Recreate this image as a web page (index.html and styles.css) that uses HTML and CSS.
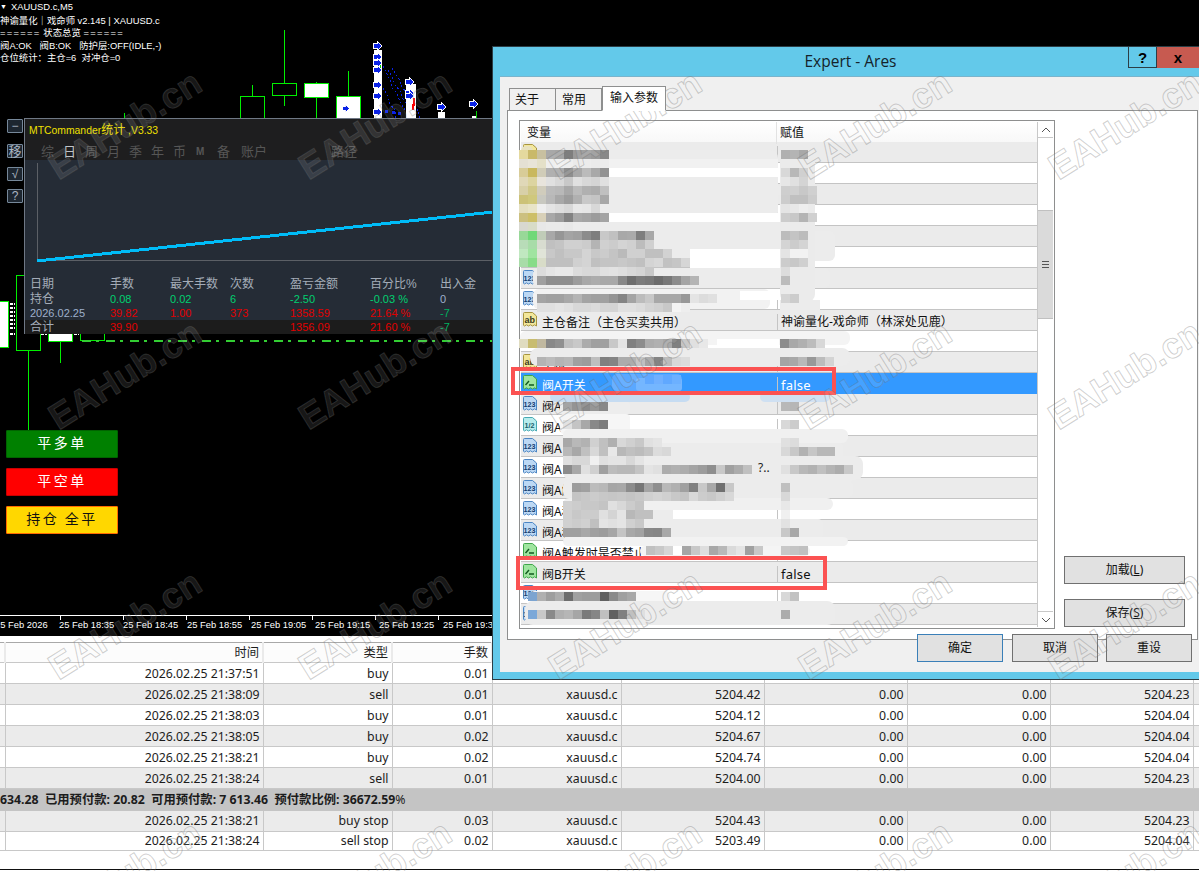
FILE: index.html
```html
<!DOCTYPE html>
<html lang="zh-CN">
<head>
<meta charset="utf-8">
<title>Expert - Ares</title>
<link rel="stylesheet" href="styles.css">
</head>
<body>
<svg class="defs" width="0" height="0" aria-hidden="true">
  <defs>
    <symbol id="ic-ab" viewBox="0 0 16 17">
      <path d="M1.5 2.5q0-1 1-1h8l4 3.5v10l-2-1.2-2 1.2-2-1.2-2 1.2-2-1.2-2 1.2-1-.7z" fill="#f3e79a" stroke="#a8953f"/>
      <text x="2.5" y="12" class="ic-t" fill="#3b3b20">ab</text>
    </symbol>
    <symbol id="ic-num" viewBox="0 0 16 17">
      <path d="M1.5 2.5q0-1 1-1h8l4 3.5v10l-2-1.2-2 1.2-2-1.2-2 1.2-2-1.2-2 1.2-1-.7z" fill="#bcd8f4" stroke="#4c86c4"/>
      <text x="1.6" y="11.5" class="ic-s" fill="#123c70">123</text>
    </symbol>
    <symbol id="ic-half" viewBox="0 0 16 17">
      <path d="M1.5 2.5q0-1 1-1h8l4 3.5v10l-2-1.2-2 1.2-2-1.2-2 1.2-2-1.2-2 1.2-1-.7z" fill="#b6ecec" stroke="#47a9b4"/>
      <text x="2.4" y="11.5" class="ic-s" fill="#17606c">1/2</text>
    </symbol>
    <symbol id="ic-bool" viewBox="0 0 16 17">
      <path d="M1.5 2.5q0-1 1-1h8l4 3.5v10l-2-1.2-2 1.2-2-1.2-2 1.2-2-1.2-2 1.2-1-.7z" fill="#9fe59f" stroke="#3fa64a"/>
      <path d="M3.5 11l3.5-4M7 11h5" fill="none" stroke="#12591f" stroke-width="1.4"/>
    </symbol>
    <symbol id="arrow" viewBox="0 0 12 14">
      <path d="M1 4h4V1l6 6-6 6v-3H1z" fill="#0a22e6" stroke="#fff" stroke-width="1.4"/>
    </symbol>
  </defs>
</svg>

<div class="terminal">
  <section class="chart">
    <svg class="candles" width="493" height="636" viewBox="0 0 493 636" aria-hidden="true">
      <g class="up">
        <path d="M252.5 85v11M284.5 30v54M284.5 95v11M316.5 82v2M316.5 97v24M348.5 71v26M124.5 113v6M28.5 350v80M60.5 341v22M40.5 333v18"/>
        <rect x="240.5" y="96.5" width="24" height="30"/>
        <rect x="272.5" y="83.5" width="24" height="12"/>
        <rect class="w" x="304.5" y="83.5" width="24" height="14"/>
        <rect class="w" x="336.5" y="96.5" width="24" height="30"/>
        <rect class="w" x="-5.5" y="301.5" width="14" height="46"/>
        <rect x="16.5" y="275.5" width="24" height="75"/>
        <rect class="w" x="48.5" y="325.5" width="24" height="16"/>
        <rect x="80.5" y="325.5" width="24" height="15"/>
      </g>
      <path class="cloud" d="M383 66l4 8 3 6 2 8 5 5 3 9 5 8 4 8M388 70l5 9 2 6 5 6 3 8 6 10M383 88l5 8 2 8 5 6 1 8M392 68l7 11 3 8 6 7 4 8 5 7 3 9"/>
      <path class="dots" d="M385 111h4M392 112h4M398 113h4M410 113h3"/>
      <g class="white-stacks">
        <rect x="374" y="50" width="8" height="70"/>
        <rect x="406" y="84" width="10" height="36"/>
        <rect x="438" y="112" width="7" height="8"/>
        <rect x="472" y="116" width="5" height="4"/>
      </g>
      <path class="red" d="M414 98v8M413 104v6"/>
      <path class="green" d="M476 111v7M380 64v6"/>
      <use href="#arrow" x="373" y="40" width="10" height="12"/>
      <use href="#arrow" x="373" y="51" width="10" height="12"/>
      <use href="#arrow" x="373" y="57" width="10" height="12"/>
      <use href="#arrow" x="373" y="64" width="10" height="12"/>
      <use href="#arrow" x="373" y="79" width="10" height="12"/>
      <use href="#arrow" x="373" y="90" width="10" height="12"/>
      <use href="#arrow" x="373" y="106" width="10" height="12"/>
      <use href="#arrow" x="405" y="76" width="10" height="12"/>
      <use href="#arrow" x="405" y="87" width="10" height="12"/>
      <use href="#arrow" x="405" y="90" width="10" height="12"/>
      <use href="#arrow" x="437" y="101" width="10" height="12"/>
      <use href="#arrow" x="469" y="98" width="10" height="12"/>
      <use href="#arrow" x="342" y="104" width="8" height="9"/>
      <path class="scrap" d="M10 304h5M10 308h5M10 312h5M10 316h5M10 320h5M10 324h5M10 328h5M10 334h5M41 334h6M74 334h5"/>
      <path class="level" d="M82 341H493"/>
    </svg>

    <div class="readout">
      <div class="readout-title"><span class="caret">▼</span>XAUUSD.c,M5</div>
      <div>神谕量化｜戏命师 v2.145 | XAUUSD.c</div>
      <div><span class="eq">======</span> 状态总览 <span class="eq">======</span></div>
      <div>阀A:OK&nbsp;&nbsp;&nbsp;阀B:OK&nbsp;&nbsp;&nbsp;防护层:OFF(IDLE,-)</div>
      <div>仓位统计：主仓=6&nbsp;&nbsp;对冲仓=0</div>
    </div>

    <div class="tool-col">
      <span class="tool tool-a">−</span>
      <span class="tool tool-b">移</span>
      <span class="tool tool-c">√</span>
      <span class="tool tool-d">?</span>
    </div>

    <div class="panel">
      <div class="panel-head">
        <div class="panel-title">MTCommander<span class="cjk">统计</span> ,V3.33</div>
        <div class="panel-tabs">
          <span>综</span><span class="on">日</span><span>周</span><span>月</span><span>季</span><span>年</span><span>币</span><span class="m">M</span><span>备</span><span class="wide">账户</span><span class="far">路径</span>
        </div>
      </div>
      <div class="panel-plot">
        <svg width="468" height="117" viewBox="0 0 468 117" aria-hidden="true">
          <path class="axis" d="M12.5 3v97.5H468"/>
          <path class="curve" d="M12 101L468 52"/>
        </svg>
      </div>
      <div class="stats">
        <div class="stat-row heads"><span>日期</span><span>手数</span><span>最大手数</span><span>次数</span><span>盈亏金额</span><span>百分比%</span><span>出入金</span></div>
        <div class="stat-row pos"><span class="lbl">持仓</span><span>0.08</span><span>0.02</span><span>6</span><span>-2.50</span><span>-0.03 %</span><span class="blue">0</span></div>
        <div class="stat-row day"><span class="lbl">2026.02.25</span><span>39.82</span><span>1.00</span><span>373</span><span>1358.59</span><span>21.64 %</span><span class="grn">-7</span></div>
        <div class="stat-row sum"><span class="lbl">合计</span><span>39.90</span><span></span><span></span><span>1356.09</span><span>21.60 %</span><span class="grn">-7</span></div>
      </div>
    </div>

    <div class="close-col">
      <button class="close close-long">平多单</button>
      <button class="close close-short">平空单</button>
      <button class="close close-all">持仓&nbsp;全平</button>
    </div>

    <div class="timeline">
      <span class="first">25 Feb 2026</span><span>25 Feb 18:35</span><span>25 Feb 18:45</span><span>25 Feb 18:55</span><span>25 Feb 19:05</span><span>25 Feb 19:15</span><span>25 Feb 19:25</span><span>25 Feb 19:35</span>
    </div>
  </section>

  <section class="orders">
    <table>
      <colgroup><col class="c0"><col class="c1"><col class="c2"><col class="c3"><col class="c4"><col class="c5"><col class="c5"><col class="c5"><col class="c5"><col class="c9"></colgroup>
      <thead><tr><th></th><th>时间</th><th>类型</th><th>手数</th><th></th><th></th><th></th><th></th><th></th><th></th></tr></thead>
      <tbody>
        <tr><td></td><td>2026.02.25 21:37:51</td><td>buy</td><td>0.01</td><td></td><td></td><td></td><td></td><td></td><td></td></tr>
        <tr class="alt"><td></td><td>2026.02.25 21:38:09</td><td>sell</td><td>0.01</td><td>xauusd.c</td><td>5204.42</td><td>0.00</td><td>0.00</td><td>5204.23</td><td></td></tr>
        <tr><td></td><td>2026.02.25 21:38:03</td><td>buy</td><td>0.01</td><td>xauusd.c</td><td>5204.12</td><td>0.00</td><td>0.00</td><td>5204.04</td><td></td></tr>
        <tr class="alt"><td></td><td>2026.02.25 21:38:05</td><td>buy</td><td>0.02</td><td>xauusd.c</td><td>5204.67</td><td>0.00</td><td>0.00</td><td>5204.04</td><td></td></tr>
        <tr><td></td><td>2026.02.25 21:38:21</td><td>buy</td><td>0.02</td><td>xauusd.c</td><td>5204.74</td><td>0.00</td><td>0.00</td><td>5204.04</td><td></td></tr>
        <tr class="alt"><td></td><td>2026.02.25 21:38:24</td><td>sell</td><td>0.01</td><td>xauusd.c</td><td>5204.00</td><td>0.00</td><td>0.00</td><td>5204.23</td><td></td></tr>
        <tr class="balance"><td colspan="10">634.28&nbsp;&nbsp;已用预付款: 20.82&nbsp;&nbsp;可用预付款: 7 613.46&nbsp;&nbsp;预付款比例: 36672.59<span class="pct">%</span></td></tr>
        <tr class="alt late"><td></td><td>2026.02.25 21:38:21</td><td>buy stop</td><td>0.03</td><td>xauusd.c</td><td>5204.43</td><td>0.00</td><td>0.00</td><td>5204.23</td><td></td></tr>
        <tr class="late last"><td></td><td>2026.02.25 21:38:24</td><td>sell stop</td><td>0.02</td><td>xauusd.c</td><td>5203.49</td><td>0.00</td><td>0.00</td><td>5204.04</td><td></td></tr>
      </tbody>
    </table>
    <div class="status-line"></div>
  </section>
</div>

<div class="dialog">
  <header class="titlebar">
    <span class="title">Expert - Ares</span>
    <span class="cap cap-help">?</span>
    <span class="cap cap-close">x</span>
  </header>
  <div class="client">
    <nav class="tabs">
      <span class="tab">关于</span>
      <span class="tab second">常用</span>
      <span class="tab active">输入参数</span>
    </nav>
    <div class="page">
      <div class="list">
        <div class="grid">
          <div class="grid-head"><span>变量</span><span>赋值</span></div>
          <div class="row"><span class="nm"><svg class="ic"><use href="#ic-ab"/></svg></span><span class="vl"></span></div>
          <div class="row"><span class="nm"><svg class="ic"><use href="#ic-ab"/></svg></span><span class="vl"></span></div>
          <div class="row"><span class="nm"><svg class="ic"><use href="#ic-ab"/></svg></span><span class="vl"></span></div>
          <div class="row"><span class="nm"><svg class="ic"><use href="#ic-ab"/></svg></span><span class="vl"></span></div>
          <div class="row"><span class="nm"><svg class="ic"><use href="#ic-bool"/></svg></span><span class="vl"></span></div>
          <div class="row"><span class="nm"><svg class="ic"><use href="#ic-bool"/></svg></span><span class="vl"></span></div>
          <div class="row"><span class="nm"><svg class="ic"><use href="#ic-num"/></svg></span><span class="vl"></span></div>
          <div class="row"><span class="nm"><svg class="ic"><use href="#ic-num"/></svg></span><span class="vl"></span></div>
          <div class="row"><span class="nm"><svg class="ic"><use href="#ic-ab"/></svg>主仓备注（主仓买卖共用）</span><span class="vl">神谕量化-戏命师（林深处见鹿）</span></div>
          <div class="row"><span class="nm"><svg class="ic"><use href="#ic-ab"/></svg></span><span class="vl"></span></div>
          <div class="row"><span class="nm"><svg class="ic"><use href="#ic-ab"/></svg>重检</span><span class="vl"></span></div>
          <div class="row sel"><span class="nm"><svg class="ic"><use href="#ic-bool"/></svg>阀A开关</span><span class="vl bool">false</span></div>
          <div class="row"><span class="nm"><svg class="ic"><use href="#ic-num"/></svg>阀A</span><span class="vl"></span></div>
          <div class="row"><span class="nm"><svg class="ic"><use href="#ic-half"/></svg>阀A</span><span class="vl"></span></div>
          <div class="row"><span class="nm"><svg class="ic"><use href="#ic-num"/></svg>阀A</span><span class="vl"></span></div>
          <div class="row"><span class="nm"><svg class="ic"><use href="#ic-num"/></svg>阀A</span><span class="vl"></span></div>
          <div class="row"><span class="nm"><svg class="ic"><use href="#ic-num"/></svg>阀A触</span><span class="vl"></span></div>
          <div class="row"><span class="nm"><svg class="ic"><use href="#ic-num"/></svg>阀A和</span><span class="vl"></span></div>
          <div class="row"><span class="nm"><svg class="ic"><use href="#ic-num"/></svg>阀A和</span><span class="vl"></span></div>
          <div class="row"><span class="nm"><svg class="ic"><use href="#ic-bool"/></svg>阀A触发时是否禁止</span><span class="vl"></span></div>
          <div class="row"><span class="nm"><svg class="ic"><use href="#ic-bool"/></svg>阀B开关</span><span class="vl bool">false</span></div>
          <div class="row"><span class="nm"><svg class="ic"><use href="#ic-num"/></svg></span><span class="vl"></span></div>
          <div class="row"><span class="nm"><svg class="ic"><use href="#ic-num"/></svg></span><span class="vl"></span></div>
        </div>
        <div class="scrollbar">
          <span class="sb-btn"><svg width="10" height="6" viewBox="0 0 10 6"><path d="M1 5l4-4 4 4" fill="none" stroke="#555"/></svg></span>
          <div class="sb-track">
            <div class="sb-thumb"><i></i><i></i><i></i></div>
          </div>
          <span class="sb-btn"><svg width="10" height="6" viewBox="0 0 10 6"><path d="M1 1l4 4 4-4" fill="none" stroke="#555"/></svg></span>
        </div>
      </div>
      <div class="side">
        <button class="btn btn-side">加载(<u>L</u>)</button>
        <button class="btn btn-side">保存(<u>S</u>)</button>
      </div>
    </div>
    <footer class="actions">
      <button class="btn btn-main default">确定</button>
      <button class="btn btn-main">取消</button>
      <button class="btn btn-main">重设</button>
    </footer>
  </div>
</div>

<svg id="redact" class="redact" width="1199" height="871" viewBox="0 0 1199 871" aria-hidden="true"></svg>
<div class="hilite hilite-a"></div>
<div class="hilite hilite-b"></div>
<span class="trunc">?..</span>

<div class="wm" aria-hidden="true">
  <span>EAHub.cn</span><span>EAHub.cn</span><span>EAHub.cn</span><span>EAHub.cn</span><span>EAHub.cn</span>
  <span>EAHub.cn</span><span>EAHub.cn</span><span>EAHub.cn</span><span>EAHub.cn</span><span>EAHub.cn</span>
  <span>EAHub.cn</span><span>EAHub.cn</span><span>EAHub.cn</span><span>EAHub.cn</span><span>EAHub.cn</span>
  <span>EAHub.cn</span><span>EAHub.cn</span><span>EAHub.cn</span><span>EAHub.cn</span><span>EAHub.cn</span>
</div>
<script src="mosaic.js"></script>
</body>
</html>
```

FILE: styles.css
```css
* { box-sizing: border-box; }
html, body { margin: 0; padding: 0; }
body {
  position: relative;
  width: 1199px;
  height: 871px;
  overflow: hidden;
  background: #fff;
  font-family: "Open Sans", "Noto Sans CJK SC", sans-serif;
  color: #111;
}
.defs { position: absolute; }
.ic-t { font: 700 9px "Liberation Sans", sans-serif; }
.ic-s { font: 700 7.2px "Liberation Sans", sans-serif; }

/* terminal */
.terminal { display: flex; flex-direction: column; width: 1199px; height: 871px; }
.chart { position: relative; height: 636px; flex: none; background: #000; overflow: hidden; }
.candles { position: absolute; left: 0; top: 0; shape-rendering: crispEdges; }
.candles .up path, .candles .up rect { fill: none; stroke: #00f000; stroke-width: 1; }
.candles .up rect { fill: #000; }
.candles .up rect.w { fill: #fff; }
.white-stacks rect { fill: #fff; }
.cloud { fill: none; stroke: #0a22e6; stroke-width: 1; stroke-dasharray: 2 2; }
.dots { fill: none; stroke: #0a22e6; stroke-width: 3; stroke-dasharray: 3 3; }
.red { fill: none; stroke: #f00; stroke-width: 2; }
.green { fill: none; stroke: #00d000; stroke-width: 1; }
.scrap { fill: none; stroke: #fff; stroke-width: 2; stroke-dasharray: 3 1; }
.level { fill: none; stroke: #32cd32; stroke-width: 2; stroke-dasharray: 9 5 3 7; }

.readout {
  position: absolute; left: 0; top: 1px;
  font: 9.4px/12.2px "Liberation Sans", "Noto Sans CJK SC", sans-serif;
  color: #fff;
  white-space: nowrap;
}
.readout-title { padding-bottom: 2px; }
.caret { display: inline-block; width: 11px; font-size: 7px; vertical-align: 1px; }
.eq { letter-spacing: 1.3px; }

.tool-col { position: absolute; left: 7px; top: 119px; width: 16px; }
.tool {
  display: flex; align-items: center; justify-content: center;
  height: 14px;
  background: #1d2630;
  border: 1px solid #76889a;
  border-radius: 1px;
  color: #aab4c0;
  font: 12px/1 "Liberation Sans", "Noto Sans CJK SC", sans-serif;
}
.tool-a { margin-bottom: 11px; }
.tool-b { margin-bottom: 9px; font-size: 13px; }
.tool-c { margin-bottom: 8px; }

.panel {
  position: absolute; left: 24px; top: 118px;
  width: 470px; height: 216px;
  display: flex; flex-direction: column;
  background: #252c36;
  border: 1px solid #6f7885;
  font-family: "Liberation Sans", "Noto Sans CJK SC", sans-serif;
}
.panel-head { height: 41px; flex: none; background: #1e1e1f; }
.panel-title { padding: 4px 0 0 4px; height: 21px; font-size: 10.4px; line-height: 15px; color: #f0e000; }
.panel-title .cjk { font-size: 12px; }
.panel-tabs { display: flex; padding: 3px 0 0 16px; font-size: 13px; line-height: 18px; color: #565656; }
.panel-tabs span { width: 22px; }
.panel-tabs .on { color: #c0c4c8; }
.panel-tabs .m { font-size: 10px; font-weight: 700; padding-left: 1px; }
.panel-tabs .wide { width: 30px; margin-left: 2px; white-space: nowrap; }
.panel-tabs .far { margin-left: 60px; white-space: nowrap; }
.panel-plot { height: 117px; flex: none; }
.panel-plot svg { display: block; shape-rendering: crispEdges; }
.axis { fill: none; stroke: #5c6066; }
.curve { fill: none; stroke: #00bcf8; stroke-width: 3; }
.stats { flex: 1; }
.stat-row {
  display: grid;
  grid-template-columns: 80px 60px 60px 60px 80px 70px 1fr;
  height: 14px; padding-left: 5px;
  font-size: 11px; line-height: 14px;
  white-space: nowrap;
}
.heads { font-size: 12px; color: #a4acb8; height: 15px; }
.pos { color: #00d070; }
.day, .sum { color: #e00000; }
.lbl { color: #a4acb8; font-size: 12px; }
.day .lbl { font-size: 11px; color: #9fb0cc; }
.blue { color: #9fb0cc; }
.grn { color: #00b060; }
.sum { background: #1c1c1c; margin: 0 -1px 0 0; height: 14px; }

.close-col { position: absolute; left: 6px; top: 430px; width: 112px; display: flex; flex-direction: column; gap: 10px; }
.close {
  height: 28px; padding: 0 0 4px; border-radius: 1px;
  font: 14px/1 "Noto Sans CJK SC", sans-serif;
  letter-spacing: 2.5px;
  color: #fff;
}
.close-long { background: #008000; border: 1px solid #006400; }
.close-short { background: #f00; border: 1px solid #c80000; }
.close-all { background: #ffd700; border: 1px solid #ff6a00; color: #111; }

.timeline {
  position: absolute; left: 0; right: 0; bottom: 0; height: 21px;
  display: flex; padding-left: 59px;
  border-top: 1px solid #fff;
  font: 9.4px/18px "Liberation Sans", sans-serif;
  color: #fff; white-space: nowrap;
  background: repeating-linear-gradient(90deg, #fff 1px, #fff 2px, transparent 2px, transparent 64px) 59px 0 / 100% 4px no-repeat;
}
.timeline span { flex: 0 0 64px; }
.timeline .first { margin-left: -64px; }

/* orders */
.orders { flex: 1; display: flex; flex-direction: column; padding-top: 6px; background: #fff; }
.orders table {
  width: 1199px; table-layout: fixed; border-collapse: collapse;
  background: #fff;
  border-top: 1px solid #a8a8a8;
  font: 12.3px/16px "Noto Sans", "Noto Sans CJK SC", sans-serif;
  color: #1c1c1c;
}
.orders .c0 { width: 5px; }
.orders .c1 { width: 258px; }
.orders .c2 { width: 129px; }
.orders .c3 { width: 100px; }
.orders .c4 { width: 129px; }
.orders .c5 { width: 143px; }
.orders .c9 { width: 6px; }
.orders th {
  height: 20px; padding: 0 3px; text-align: right; font-weight: 400;
  background: #fcfcfc;
  border-right: 2px solid #eaeaea;
  border-bottom: 1px solid #c8c8c8;
}
.orders td {
  height: 21px; padding: 2px 3px 0 0; text-align: right; white-space: nowrap; overflow: hidden;
  border-right: 1px solid #c8c8c8;
  border-bottom: 1px solid #c8c8c8;
}
.orders tr.late td { padding-top: 0; }
.orders tr.last td { height: 19px; }
.orders tr.alt td { background: #ebebeb; }
.orders tr.balance td {
  height: 22px; padding: 0; text-align: left; font-weight: 700; background: #c4c4c4; border: 0;
}
.pct { font-weight: 400; }
.status-line { height: 1px; margin-top: auto; margin-bottom: 1px; background: #111; }

/* dialog */
.dialog {
  position: absolute; left: 492px; top: 46px; width: 707px; height: 634px;
  display: flex; flex-direction: column;
  background: #63c9ea;
  border: 1px solid #2c3e46; border-right: 0;
}
.titlebar { position: relative; height: 29px; flex: none; display: flex; justify-content: flex-end; align-items: flex-start; }
.title {
  position: absolute; left: 0; right: 0; top: 4px; text-align: center;
  font-size: 15.5px; line-height: 20px; color: #14232b; padding-left: 9px;
}
.cap {
  position: relative; height: 21px; display: flex; align-items: center; justify-content: center;
  font: 700 15px/1 "Liberation Sans", sans-serif; color: #000;
}
.cap-help { width: 29px; border: 1px solid #2c3e46; border-top: 0; }
.cap-close { width: 42px; background: #c75a50; }
.client {
  flex: none; height: 596px; margin-left: 7px;
  display: flex; flex-direction: column;
  background: #f0f0f0;
  padding-top: 10px;
  border-top: 1px solid #7ab4cc;
  font-family: "Noto Sans", "Noto Sans CJK SC", sans-serif;
}
.tabs { display: flex; align-items: flex-end; height: 24px; padding-left: 9px; position: relative; z-index: 1; margin-bottom: -1px; }
.tab {
  width: 47px; height: 23px; margin-right: -1px;
  border: 1px solid #8e8f8f;
  background: #f0f0f0;
  font-size: 12px; line-height: 21px; padding-left: 5px;
}
.tab.second { padding-left: 6px; }
.tab.active { width: 64px; height: 25px; background: #fff; border-bottom-color: #fff; padding-left: 7px; margin-left: 1px; }
.page {
  position: relative;
  display: flex; height: 530px; margin: 0 1px 0 7px;
  background: #fff; border: 1px solid #8e8f8f;
  padding: 9px 12px 0 11px;
}
.list {
  width: 536px; height: 509px; flex: none;
  display: flex; padding: 1px;
  border: 1px solid #8e8f8f;
  background: #fff;
  overflow: hidden;
}
.grid { flex: 1; min-width: 0; }
.grid-head {
  display: grid; grid-template-columns: 256px 1fr;
  height: 20px; background: linear-gradient(#fff, #f8f8f8);
  font-size: 12px; line-height: 22px;
}
.grid-head span { padding-left: 6px; border-right: 1px solid #e2e2e2; }
.grid-head span + span { padding-left: 3px; border: 0; }
.row {
  display: grid; grid-template-columns: 257px 1fr;
  height: 21px;
  border-bottom: 1px solid #c4c4c4;
  font-size: 12px; line-height: 20px;
  white-space: nowrap;
}
.row:nth-of-type(even) { background: #ebebeb; }
.row.sel { background: #3399ff; color: #fff; border-bottom-color: #3399ff; }
.nm { display: flex; align-items: center; padding-left: 1px; border-right: 1px solid #c4c4c4; margin-top: 4px; height: 17px; }
.ic { align-self: flex-start; width: 16px; height: 17px; margin: -3px 4px 0 0; flex: none; overflow: visible; }
.vl { padding: 2px 0 0 3px; }
.vl.bool { font-size: 13px; letter-spacing: .2px; }
.scrollbar { width: 16px; flex: none; display: flex; flex-direction: column; border-left: 1px solid #c8c8c8; }
.sb-btn { height: 16px; flex: none; display: flex; align-items: center; justify-content: center; background: #fff; border-bottom: 1px solid #c8c8c8; }
.scrollbar .sb-btn:last-child { border-bottom: 0; border-top: 1px solid #c8c8c8; }
.sb-track { flex: 1; padding-top: 72px; }
.sb-thumb {
  height: 109px; background: #dadada; border: 1px solid #c0c0c0; border-width: 1px 0;
  display: flex; flex-direction: column; align-items: center; justify-content: center; gap: 1px;
}
.sb-thumb i { display: block; width: 7px; height: 1px; background: #555; margin-bottom: 1px; }
.side { flex: 1; display: flex; flex-direction: column; align-items: flex-end; justify-content: flex-end; gap: 15px; padding-bottom: 12px; }
.btn {
  display: block; padding: 0;
  background: #e1e1e1; border: 1px solid #707070;
  font: 12px/1 "Noto Sans", "Noto Sans CJK SC", sans-serif;
  color: #111;
}
.btn-side { width: 121px; height: 28px; }
.actions { display: flex; justify-content: flex-end; gap: 8px; padding-right: 7px; margin-top: -6px; position: relative; }
.btn-main { width: 86px; height: 28px; }
.btn-main.default { border-color: #3a7fb8; margin-right: 1px; }

/* overlays */
.redact { position: absolute; left: 0; top: 0; }
.hilite { position: absolute; border: 4px solid #fb5252; }
.hilite-a { left: 511px; top: 367px; width: 325px; height: 28px; }
.hilite-b { left: 516px; top: 556px; width: 311px; height: 34px; }
.trunc { position: absolute; left: 758px; top: 460px; font: 12px/16px "Noto Sans", sans-serif; color: #222; }

.wm {
  position: absolute; left: 0; top: 0; width: 1199px; height: 871px;
  overflow: hidden;
  display: grid; grid-template-columns: repeat(5, 250px); grid-auto-rows: 250px;
  pointer-events: none;
}
.wm span {
  display: flex; align-items: center; justify-content: center;
  transform: rotate(-32deg);
  font: 700 36px/1 "Liberation Sans", sans-serif;
  color: rgba(255, 255, 255, .1);
  -webkit-text-stroke: 1px rgba(110, 110, 110, .32);
}
```

FILE: mosaic.js
```js
// Redacted parameter rows: brush strokes and 9px mosaic blocks.
var NS = 'http://www.w3.org/2000/svg';
var svg = document.getElementById('redact');
function rect(x, y, w, h, fill, rx) {
  var r = document.createElementNS(NS, 'rect');
  r.setAttribute('x', x); r.setAttribute('y', y);
  r.setAttribute('width', w); r.setAttribute('height', h);
  r.setAttribute('fill', fill);
  if (rx) r.setAttribute('rx', rx);
  svg.appendChild(r);
}
// x, y, w, h, fill, radius
[
  [521,146,12,12,'#e8e2c0',5],[520,150,258,70,'#ececec',8],[520,159,258,9,'#f1f1f1'],[609,168,170,9,'#fff'],[520,186,290,9,'#ececec',4],
  [609,213,170,9,'#fff'],[520,222,270,9,'#ececec',4],[520,231,315,30,'#ececec',6],[690,249,90,21,'#fff'],
  [533,268,297,20,'#ececec',6],[533,289,237,20,'#f2f2f2',6],[740,291,90,9,'#fff'],[780,142,35,160,'#ebebeb',8],
  [520,331,330,14,'#f4f4f4',6],[717,339,62,9,'#fff'],[530,348,320,18,'#ececec',8],[780,300,40,10,'#ececec'],
  [612,374,70,17,'#5aa8ff',5],[636,378,46,13,'#74b6ff',3],
  [550,392,140,10,'#c6dcf2',5],[760,392,70,10,'#cfe0f2',5],[560,402,70,12,'#ededed',3],[560,414,70,20,'#f6f6f6',4],
  [563,429,285,14,'#f0f0f0',6],[563,443,280,16,'#ececec',4],[563,456,300,24,'#ececec',8],[775,470,80,12,'#ececec',6],
  [563,480,290,18,'#ececec',6],[563,498,270,12,'#f0f0f0',6],[563,510,110,24,'#ececec'],[563,519,260,20,'#ececec',5],
  [563,537,285,9,'#f2f2f2',5],[640,546,170,10,'#f4f4f4',5],[530,591,140,10,'#f6f6f6',5],[525,601,310,24,'#ececec',8]
].forEach(function (b) { rect(b[0], b[1], b[2], b[3], b[4], b[5]); });

// x, y, cells (two hex digits = grey, six = colour)
[
  [519,150,'e4d99e c9b96a c8c0a0 a8 a5 7e 9a a0 9a 88'],[781,150,'b0 b4 a8'],
  [519,159,'e4e0d4 e8e4d8 e4e0c8 ee f0 ee ea ec ea ec'],
  [519,168,'d8cc98 c9b85e d0ccb8 b0 aa 8e a8 bb a8 92'],[781,168,'d8 b8 d0'],
  [519,177,'e0d8b8 dcd4a0 e8e4dc e0 d8 c8 e0 d8 d4 e0'],[781,177,'e6 e0 d4'],
  [519,186,'d8d0a8 d0c888 d0ccbc bb b8 a8 bb b0 ac c0'],[781,186,'ce d0 c8 d0'],
  [519,195,'ccc278 cfc87c c8c8c0 b8 a8 9c b0 c8 c4 a8'],[781,195,'cc c0 c0 cc'],
  [519,204,'e4dfc0 e8e4c8 ee e4 de d8 e8 e6 d8'],[781,204,'e4 e8 ee'],
  [519,213,'ccc080 cdbf68 d8d0b8 a8 9c 82 a8 a4 9c a4'],[781,213,'cc c8 b4 d0'],
  [519,222,'d8d8d0 d8dcc8 e8 ea ea e8'],
  [519,231,'98d898 70d878 c0ccb8 a8 96 a4 a0 8c 7e c8 c0 a8 aa 7e a8'],[781,231,'bc c4 bc'],
  [519,240,'b8dcb8 a8dca8 d8dcd0 c0 c4 d0 d0 cc b4 d0 cc d4 d0 bc d0'],[781,240,'d4 cc d4'],
  [519,249,'c0e8c0 a0e4a0 e0e4d8 c8 c0 c8 c8 d4 c8 cc c4 ba d0 d0 c0 c0 d2'],[781,249,'e4 f2 f2'],
  [519,258,'a8dca8 88dc88 d8dcc8 c0 c0 c0 d0 d4 c0 c4 c4 c8 c4 c0 d4 d8 c2 c6 d6'],[781,258,'cc c8 d0'],
  [537,267,'dc e4 e8 e8 dc d8 d8 e0 e2 de d8 d4 c8'],[781,267,'dc'],
  [537,276,'a0 8e 8e 8e 9c a8 ac a8 a8 88 6e 7c 78 6c 78 8c a4 b4'],[781,276,'bc'],
  [537,294,'a4 a0 a0 a8 b4 a4 a0 a0 94 84 a4 bc c8 a8 a8 a8 98 e4 dc e0'],[781,294,'d4 cc'],
  [537,303,'e0 e0 e4 e0 d8 d8 dc d4 d4 e0 e0 dc d4 d0 c8 f4 ee'],
  [519,339,'e0dcc0 c8bc70 c0b8a0 88 90 c0 c8 ac a0 a0 c8 e4 80 8c ac b0 a8 80 c4 e0 e8'],[780,339,'8c a8 b0 bc d8'],
  [537,357,'b4 bc b4 b8 a0 9c be 80 84 ac ac c0 a4 84 bc d8 dc'],[780,357,'a4 a8 b8 98 bc d4'],
  [645,375,'60a8ff 70b0ff 60a8ff 6cb0ff'],
  [563,402,'a4 94 8a 96 88'],[781,402,'b8 b6'],
  [563,420,'e0 c4 a8 88 7c'],[781,420,'d8 cc'],
  [563,438,'a8 b8 b2 d0 c0 b0 d8 d0 c8 e0 e4'],[781,438,'e0 dc'],
  [563,447,'b8 a8 c0 d8 c0 e8 b8 c0 bc c4 dc d8'],[781,447,'d8 c8 b2 c6 b8 b8'],
  [563,456,'e0 d8 d8 f0 e0 e4 e4 d8 e4'],
  [563,465,'8c a8 e0 d0 a0 bc b8 b8 c4 e4 e0 ac b0 ac a4 9c 8e c8 a0 ac c0'],[781,465,'e0 c8 b8 b2 c0 b4 ac c8'],
  [572,483,'9c a0 bc b8 a6 a8 8c 76 a4 8e b8 b0 a0 80 c8 a8 70 c8'],[781,483,'c0'],
  [572,492,'c4 c8 cc c8 c6 c8 c4 c8 d0 d4 d0 c8 c4 d8 cc c8 d0 d8'],[781,492,'d8'],
  [563,501,'d0 cc c8 c8 c4 e0 d8 cc c4'],[781,501,'e8'],
  [563,510,'d0 c8 cc cc e0 d4 e4 b8 c0 c0'],[781,510,'f0'],
  [563,519,'d0 cc d0 c0 e4 e0 e4 d0 c8'],[781,519,'e2'],
  [563,528,'a0 a0 a8 a0 9c a6 c4 a8 a2 88 86 a8'],[781,528,'c8 a8'],
  [646,546,'c0 c8 d6 ff a6 c8 de a8 b8 da e4 a0 c8'],[781,546,'c8 c4 c0'],
  [528,592,'7ca4d0 b0 9e ac 6c a0 9c 9c 60 8a a0 a8'],[781,592,'d8 c2'],
  [528,610,'7ca8d8 c8 8a b0 b6 a6 7a 86 c0 60 80 c0 e0'],[781,610,'ac']
].forEach(function (m) {
  m[2].split(' ').forEach(function (c, i) {
    rect(m[0] + i * 9, m[1], 9, 9, '#' + (c.length === 2 ? c + c + c : c));
  });
});
```
